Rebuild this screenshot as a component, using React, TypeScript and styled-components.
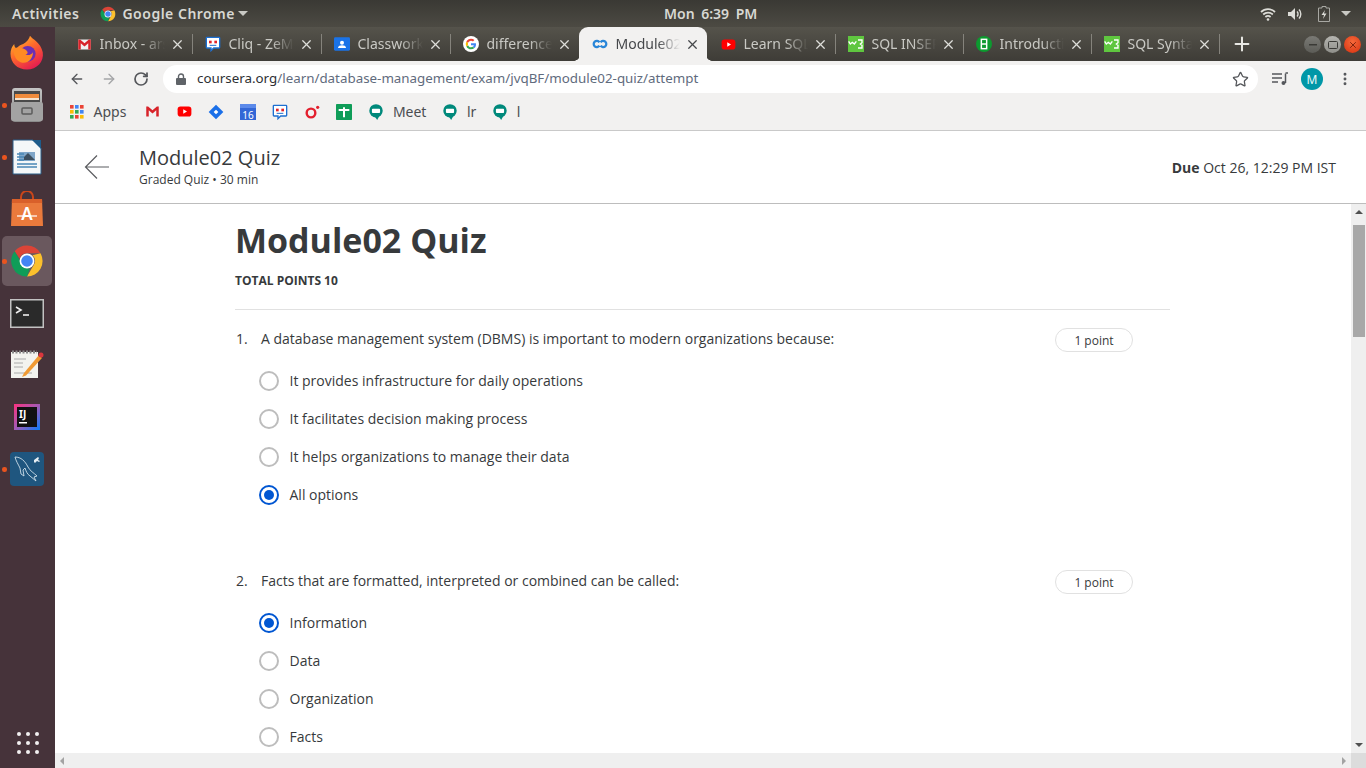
import React from 'react';
import styled, { createGlobalStyle, css } from 'styled-components';
import { ArrowLeft, ArrowRight, MoreVertical, Plus, RotateCw, Star, X } from 'lucide-react';

const GlobalStyle = createGlobalStyle`
  html, body {
    margin: 0;
    height: 100%;
    overflow: hidden;
    background: #fff;
  }
  #root {
    height: 100%;
  }
  * {
    box-sizing: border-box;
  }
`;

const Screen = styled.div`
  width: 1366px;
  height: 768px;
  display: flex;
  flex-direction: column;
  overflow: hidden;
`;

/* gnome top bar */
const TopBar = styled.header`
  height: 27px;
  flex: none;
  display: flex;
  align-items: center;
  position: relative;
  padding: 0 0 0 12px;
  background: linear-gradient(#3a3934, #4c4a43);
  color: #d8d8d3;
  font: 600 14px 'Noto Sans', sans-serif;
`;

const Spaced = styled.span`
  letter-spacing: 0.5px;
`;

const AppMenu = styled.div`
  display: flex;
  align-items: center;
  gap: 6px;
  margin-left: 21px;
`;

const Caret = styled.span<{ $pull?: boolean }>`
  width: 0;
  height: 0;
  margin-left: ${(p) => (p.$pull ? '-3px' : '0')};
  border-left: 5px solid transparent;
  border-right: 5px solid transparent;
  border-top: 5px solid #c9c9c4;
`;

const Clock = styled.div`
  position: absolute;
  left: 664px;
  top: 4px;
  word-spacing: 3px;
`;

const Tray = styled.div`
  margin-left: auto;
  display: flex;
  align-items: center;
  gap: 11px;
  padding-right: 15px;
`;

const BatterySlot = styled.span`
  display: flex;
  margin-left: 4px;
`;

const Desktop = styled.div`
  flex: 1;
  display: flex;
  min-height: 0;
`;

/* launcher on the left */
const Dock = styled.nav`
  width: 55px;
  flex: none;
  display: flex;
  flex-direction: column;
  align-items: center;
  padding-top: 1px;
  background: #46333a;
`;

const DockItem = styled.div<{ $active?: boolean; $running?: boolean }>`
  width: 50px;
  height: 50px;
  margin: 0 1px 2px 0;
  flex: none;
  display: flex;
  align-items: center;
  justify-content: center;
  position: relative;
  border-radius: 5px;
  background: ${(p) => (p.$active ? '#6a585e' : 'transparent')};
  &::before {
    content: '';
    display: ${(p) => (p.$running ? 'block' : 'none')};
    position: absolute;
    left: 0;
    top: 23px;
    width: 4.5px;
    height: 4.5px;
    border-radius: 50%;
    background: #e9541f;
  }
`;

const DockSpacer = styled.div`
  flex: 1;
`;

const AppGrid = styled.div`
  display: grid;
  grid-template-columns: repeat(3, 4px);
  gap: 5px;
  margin-bottom: 14px;
  span {
    width: 4px;
    height: 4px;
    border-radius: 50%;
    background: #f2f0f0;
  }
`;

const Browser = styled.div`
  flex: 1;
  min-width: 0;
  display: flex;
  flex-direction: column;
`;

const TabStrip = styled.div`
  height: 34px;
  flex: none;
  display: flex;
  padding-left: 8px;
  background: linear-gradient(#55534b, #3e3c37);
`;

const activeFlares = css`
  &::before,
  &::after {
    content: '';
    position: absolute;
    bottom: 0;
    width: 6px;
    height: 6px;
  }
  &::before {
    left: -5px;
    background: radial-gradient(circle at 0 0, transparent 5.5px, #f2f1f0 6px);
  }
  &::after {
    right: -5px;
    background: radial-gradient(circle at 100% 0, transparent 5.5px, #f2f1f0 6px);
  }
`;

const Tab = styled.div<{ $active?: boolean; $wide?: boolean; $bare?: boolean }>`
  width: ${(p) => (p.$wide ? 129 : 128)}px;
  flex: none;
  display: flex;
  align-items: center;
  padding: 0 7.5px 0 13px;
  position: relative;
  font: 400 14px 'Noto Sans', sans-serif;
  color: ${(p) => (p.$active ? '#45474a' : '#c9c9c4')};
  background: ${(p) => (p.$active ? '#f2f1f0' : 'transparent')};
  border-radius: ${(p) => (p.$active ? '9px 9px 0 0' : '0')};
  ${(p) =>
    p.$active
      ? activeFlares
      : css`
          &::after {
            content: '';
            display: ${p.$bare ? 'none' : 'block'};
            position: absolute;
            right: -1px;
            top: 7px;
            height: 20px;
            width: 1px;
            background: #85837c;
          }
        `}
`;

const TabIcon = styled.span`
  width: 16px;
  height: 16px;
  flex: none;
  display: flex;
  align-items: center;
  justify-content: center;
`;

const TabTitle = styled.span`
  flex: 1;
  min-width: 0;
  margin: 0 0 2px 7.5px;
  overflow: hidden;
  white-space: nowrap;
  -webkit-mask-image: linear-gradient(90deg, #000 65%, transparent 100%);
  mask-image: linear-gradient(90deg, #000 65%, transparent 100%);
`;

const TabClose = styled(X)`
  flex: none;
  margin-left: 5px;
`;

const NewTab = styled(Plus)`
  margin: 6px 0 0 12px;
  color: #e8e8e4;
`;

const WindowButtons = styled.div`
  margin-left: auto;
  display: flex;
  gap: 3px;
  padding: 9px 5px 0 0;
`;

const WindowButton = styled.div<{ $kind: 'min' | 'max' | 'close' }>`
  width: 17px;
  height: 17px;
  border-radius: 50%;
  display: flex;
  align-items: center;
  justify-content: center;
  background: ${(p) =>
    p.$kind === 'close'
      ? 'radial-gradient(circle at 50% 35%, #f7693a, #d5300f)'
      : p.$kind === 'max'
        ? 'linear-gradient(#b5b5b0, #8f8f8a)'
        : 'linear-gradient(#7a7a75, #5c5c57)'};
`;

const Toolbar = styled.div`
  height: 36px;
  flex: none;
  display: flex;
  align-items: flex-start;
  padding: 4px 0 0 14px;
  background: #f2f1f0;
`;

const NavButton = styled.div<{ $dim?: boolean }>`
  width: 16px;
  height: 28px;
  margin-right: 16px;
  display: flex;
  align-items: center;
  justify-content: center;
  color: ${(p) => (p.$dim ? '#a4a5a7' : '#55575b')};
`;

const Omnibox = styled.div`
  width: 1095px;
  height: 28px;
  margin-left: -2px;
  display: flex;
  align-items: center;
  padding: 0 9px 0 13px;
  border-radius: 14px;
  background: #fff;
  color: #5f6b7d;
  font: 400 13.37px 'Noto Sans', sans-serif;
  b {
    font-weight: 400;
    color: #2d2f33;
  }
`;

const Url = styled.div`
  flex: 1;
  margin: 0 0 2px 11px;
`;

const ToolbarEnd = styled.div`
  display: flex;
  align-items: center;
  height: 28px;
  margin-left: 14px;
  color: #55575b;
`;

const Avatar = styled.div`
  width: 22px;
  height: 22px;
  margin-left: 13px;
  border-radius: 50%;
  display: flex;
  align-items: center;
  justify-content: center;
  background: #0097a7;
  color: #e8f7f8;
  font: 400 12px 'Noto Sans', sans-serif;
`;

const MenuDots = styled(MoreVertical)`
  margin-left: 14px;
`;

const BookmarksBar = styled.div`
  height: 34px;
  flex: none;
  display: flex;
  align-items: center;
  padding: 0 0 4px 14px;
  background: #f2f1f0;
  color: #4b4d50;
  font: 400 14px 'Noto Sans', sans-serif;
  border-bottom: 1px solid #c9c9c9;
`;

const Bookmark = styled.div`
  display: flex;
  align-items: center;
  gap: 8.5px;
  margin-right: 16px;
  &:first-child {
    margin-right: 18px;
  }
`;

const BookmarkIcon = styled.span`
  width: 16px;
  height: 16px;
  flex: none;
  display: flex;
  align-items: center;
  justify-content: center;
`;

/* coursera page */
const PageHeader = styled.div`
  height: 73px;
  flex: none;
  display: flex;
  align-items: center;
  padding: 0 30px 0 29px;
  background: #fff;
  border-bottom: 1px solid #bdbdbd;
  color: #373a3c;
  font-family: 'Open Sans', sans-serif;
`;

const HeaderTitles = styled.div`
  margin-left: 29px;
  padding-bottom: 2px;
`;

const HeaderTitle = styled.div`
  font-size: 20px;
  line-height: 28px;
`;

const HeaderSub = styled.div`
  font-size: 12px;
  line-height: 16px;
`;

const Due = styled.div`
  margin-left: auto;
  font-size: 14px;
  b {
    font-weight: 700;
  }
`;

const PageBody = styled.div`
  flex: 1;
  min-height: 0;
  display: grid;
  grid-template-columns: 1fr 15px;
  grid-template-rows: 1fr 15px;
`;

const Content = styled.main`
  min-height: 0;
  overflow: hidden;
  padding: 13px 0 0 180px;
  color: #373a3c;
  font: 400 14px 'Open Sans', sans-serif;
`;

const Column = styled.div`
  width: 935px;
`;

const QuizTitle = styled.h1`
  margin: 0;
  font-size: 34px;
  line-height: 46px;
  font-weight: 700;
`;

const TotalPoints = styled.div`
  margin-top: 9px;
  padding-bottom: 20px;
  font-size: 12px;
  line-height: 17px;
  font-weight: 700;
  border-bottom: 1px solid #e1e1e1;
`;

const Question = styled.section`
  margin-top: 16px;
  margin-bottom: 54px;
`;

const QuestionHead = styled.div`
  display: flex;
  align-items: center;
  height: 24px;
  margin-bottom: 12px;
`;

const QuestionNumber = styled.span`
  width: 26px;
  padding-left: 1px;
`;

const QuestionText = styled.span`
  flex: 1;
`;

const PointPill = styled.div`
  width: 78px;
  height: 24px;
  margin: 4px 37px 0 0;
  display: flex;
  align-items: center;
  justify-content: center;
  border: 1px solid #e1e1e1;
  border-radius: 12px;
  font-size: 12px;
`;

const Option = styled.label`
  display: flex;
  align-items: center;
  height: 38px;
  padding-left: 24px;
`;

const OptionLabel = styled.span`
  margin-bottom: 2px;
`;

const Radio = styled.span<{ $checked?: boolean }>`
  width: 20px;
  height: 20px;
  margin-right: 10.5px;
  flex: none;
  border-radius: 50%;
  border: 2px solid ${(p) => (p.$checked ? '#0056d2' : '#bdbdbd')};
  display: flex;
  align-items: center;
  justify-content: center;
  &::after {
    content: '';
    display: ${(p) => (p.$checked ? 'block' : 'none')};
    width: 10px;
    height: 10px;
    border-radius: 50%;
    background: #0056d2;
  }
`;

const VScroll = styled.div`
  background: #efefef;
  display: flex;
  flex-direction: column;
  align-items: center;
  padding-top: 6px;
`;

const Thumb = styled.div`
  width: 12px;
  height: 112px;
  margin-top: 11px;
  background: #a8a8a8;
`;

const HScroll = styled.div`
  background: #efefef;
  display: flex;
  align-items: center;
  justify-content: space-between;
  padding: 0 5px;
`;

const Corner = styled.div`
  background: #dcdcdc;
`;

const ScrollArrow = styled.span<{ $dir: 'up' | 'down' | 'left' | 'right'; $dim?: boolean }>`
  width: 0;
  height: 0;
  border-style: solid;
  border-color: transparent;
  ${(p) => {
    const c = p.$dim ? '#a3a3a3' : '#505050';
    if (p.$dir === 'up') return `border-width: 0 4px 4px; border-bottom-color: ${c};`;
    if (p.$dir === 'down') return `border-width: 4px 4px 0; border-top-color: ${c}; margin-top: auto; margin-bottom: 6px;`;
    if (p.$dir === 'left') return `border-width: 4px 4px 4px 0; border-right-color: ${c};`;
    return `border-width: 4px 0 4px 4px; border-left-color: ${c};`;
  }}
`;

/* --- drawings --- */

const ChromeIcon: React.FC<{ size: number }> = ({ size }) => (
  <svg width={size} height={size} viewBox="0 0 48 48">
    <path d="M24 2a22 22 0 0 1 19.05 11H24a11 11 0 0 0-10.4 7.4L6.6 10.3A22 22 0 0 1 24 2z" fill="#db4437" />
    <path d="M43.05 13A22 22 0 0 1 24 46l9.5-16.5A11 11 0 0 0 31.8 16z" fill="#fbc02d" />
    <path d="M24 46A22 22 0 0 1 6.6 10.3l9.9 17.2A11 11 0 0 0 28 34.3z" fill="#0f9d58" />
    <circle cx="24" cy="24" r="10.5" fill="#fff" />
    <circle cx="24" cy="24" r="8.2" fill="#4285f4" />
  </svg>
);

const GmailIcon = () => (
  <svg width="15" height="15" viewBox="0 0 24 24">
    <path d="M2 4h20v16H2z" fill="#f1f1f1" />
    <path d="M2 20V4h3l7 6 7-6h3v16h-4V10l-6 5-6-5v10z" fill="#d8232a" />
  </svg>
);

const CliqIcon = () => (
  <svg width="16" height="16" viewBox="0 0 24 24">
    <path d="M3 2h18a1 1 0 0 1 1 1v14a1 1 0 0 1-1 1h-8l-4 4v-4H3a1 1 0 0 1-1-1V3a1 1 0 0 1 1-1z" fill="#fff" stroke="#1d6fd1" strokeWidth="2" />
    <rect x="6" y="7" width="4" height="4" fill="#e2242b" />
    <rect x="14" y="7" width="4" height="4" fill="#e2242b" />
    <path d="M7 14h10" stroke="#1d6fd1" strokeWidth="1.5" />
  </svg>
);

const ClassroomIcon = () => (
  <svg width="16" height="16" viewBox="0 0 24 24">
    <rect x="0" y="2" width="24" height="20" rx="2" fill="#1a73e8" />
    <circle cx="12" cy="10" r="3" fill="#fff" />
    <path d="M6 18c0-3 3-4 6-4s6 1 6 4z" fill="#fff" />
  </svg>
);

const GoogleIcon = () => (
  <svg width="16" height="16" viewBox="0 0 48 48">
    <circle cx="24" cy="24" r="24" fill="#fff" />
    <path d="M39 24.5c0-1-.1-2-.3-3H24v6h8.5a7.5 7.5 0 0 1-3.2 4.8l5 3.9c3-2.7 4.7-6.8 4.7-11.700z" fill="#4285f4" />
    <path d="M24 40c4.100 0 7.500-1.300 10.300-3.800l-5-3.900c-1.400.9-3.200 1.500-5.300 1.500-4 0-7.500-2.700-8.700-6.400l-5.200 4C12.700 36.700 17.900 40 24 40z" fill="#34a853" />
    <path d="M15.300 27.400a10 10 0 0 1 0-6.800l-5.200-4a16 16 0 0 0 0 14.800z" fill="#fbbc05" />
    <path d="M24 14c2.300 0 4.300.8 5.900 2.300l4.400-4.400A15.500 15.500 0 0 0 24 8c-6.100 0-11.300 3.300-13.900 8.600l5.200 4c1.200-3.700 4.700-6.600 8.700-6.600z" fill="#ea4335" />
  </svg>
);

const CourseraIcon = () => (
  <svg width="16" height="16" viewBox="0 0 24 24" fill="none" stroke="#2a86d8" strokeWidth="3.4">
    <path d="M11 9.500a4.600 4.600 0 1 0 0 5M13 14.500a4.600 4.600 0 1 0 0-5" />
  </svg>
);

const YoutubeIcon = () => (
  <svg width="15" height="15" viewBox="0 0 24 24">
    <rect x="1" y="4" width="22" height="16" rx="4.500" fill="#f00" />
    <path d="M10 8.500v7l6-3.500z" fill="#fff" />
  </svg>
);

const W3Icon = () => (
  <svg width="16" height="16" viewBox="0 0 24 24">
    <rect width="24" height="24" fill="#5fc63f" />
    <path d="M1 8l2.500 4 3-2.500 3 2.500 3-4M15 6h6v4l-2.500 2 2.500 2v4h-6" fill="none" stroke="#fff" strokeWidth="2" />
  </svg>
);

const BootstrapIcon = () => (
  <svg width="16" height="16" viewBox="0 0 24 24">
    <circle cx="12" cy="12" r="12" fill="#0c9a2f" />
    <rect x="8" y="5" width="8" height="14" fill="none" stroke="#fff" strokeWidth="2.200" />
    <path d="M8 12h8" stroke="#fff" strokeWidth="2.200" />
  </svg>
);

const AppsIcon = () => (
  <svg width="14" height="14" viewBox="0 0 14 14">
    {['#ea4335', '#4285f4', '#ea4335', '#fbbc05', '#34a853', '#4285f4', '#34a853', '#ea4335', '#fbbc05'].map((c, i) => (
      <rect key={i} x={(i % 3) * 5} y={Math.floor(i / 3) * 5} width="3.600" height="3.600" fill={c} />
    ))}
  </svg>
);

const JiraIcon = () => (
  <svg width="16" height="16" viewBox="0 0 24 24">
    <path d="M12 1l11 11-11 11L1 12z" fill="#1a6fe8" />
    <path d="M12 8.500l3.500 3.500-3.500 3.500L8.500 12z" fill="#fff" />
  </svg>
);

const CalendarIcon = () => (
  <svg width="16" height="16" viewBox="0 0 16 16">
    <rect width="16" height="16" fill="#3367d6" />
    <rect width="16" height="4" fill="#5c8aea" />
    <text x="8" y="14.500" textAnchor="middle" fontSize="10" fontFamily="Noto Sans" fill="#fff">16</text>
  </svg>
);

const RingIcon = () => (
  <svg width="16" height="16" viewBox="0 0 24 24" fill="none">
    <circle cx="10.500" cy="13.500" r="6.500" stroke="#e3202e" strokeWidth="3.600" />
    <circle cx="20.500" cy="5" r="2.400" fill="#e3202e" />
  </svg>
);

const SheetIcon = () => (
  <svg width="16" height="16" viewBox="0 0 24 24">
    <rect width="24" height="24" rx="1" fill="#0f9d58" />
    <path d="M4 9h16M12 5v15" stroke="#fff" strokeWidth="3" />
  </svg>
);

const MeetIcon = () => (
  <svg width="14" height="16" viewBox="0 0 24 27">
    <circle cx="12" cy="11.500" r="11.500" fill="#00897b" />
    <path d="M9 20h9l-4 7z" fill="#00897b" />
    <rect x="5" y="8" width="14" height="7" rx="1.500" fill="#fff" />
  </svg>
);

const LockIcon = () => (
  <svg width="10" height="12" viewBox="0 0 10 12">
    <path d="M2.500 5V3.500a2.500 2.500 0 0 1 5 0V5" fill="none" stroke="#5f6368" strokeWidth="1.400" />
    <rect y="5" width="10" height="7" rx="1" fill="#5f6368" />
  </svg>
);

const FirefoxIcon = () => (
  <svg width="36" height="38" viewBox="0 0 48 48">
    <defs>
      <linearGradient id="ff" x1="0" y1="0" x2="0.6" y2="1">
        <stop offset="0" stopColor="#ffcf2e" />
        <stop offset="0.5" stopColor="#ff6a2b" />
        <stop offset="1" stopColor="#e5214f" />
      </linearGradient>
    </defs>
    <path d="M24 46C11 46 2 37 2 25c0-5 2-10 5-13 0 3 1 5 3 6 2-3 5-5 9-6 5-3 8-7 9-11 3 5 14 8 17 22 2 13-8 23-21 23z" fill="url(#ff)" />
    <circle cx="25" cy="25" r="10.500" fill="#6b2fb3" />
    <path d="M6 18c5-2 10-2 15 1 5 3 5 6 1 7 4 2 8 0 10-3 0 8-6 15-14 14C11 36 5 28 6 18z" fill="#ff8a24" />
  </svg>
);

const FilesIcon = () => (
  <svg width="32" height="34" viewBox="0 0 32 34">
    <defs>
      <linearGradient id="cab" x1="0" y1="0" x2="0" y2="1">
        <stop offset="0" stopColor="#c4c4c4" />
        <stop offset="1" stopColor="#8a8a8a" />
      </linearGradient>
    </defs>
    <rect x="1" y="0" width="30" height="34" rx="3" fill="url(#cab)" />
    <rect x="3" y="3" width="26" height="11" fill="#4a4a4a" />
    <rect x="4" y="6" width="24" height="4" fill="#ef8b3c" />
    <rect x="4" y="10" width="24" height="2" fill="#f5e3cf" />
    <rect x="0" y="14" width="32" height="19" rx="2" fill="#a3a3a3" />
    <rect x="11" y="20" width="10" height="6" rx="1" fill="none" stroke="#5c5c5c" strokeWidth="1.500" />
  </svg>
);

const WriterIcon = () => (
  <svg width="30" height="36" viewBox="0 0 30 36">
    <path d="M1 1h20l8 8v26H1z" fill="#f4f7f8" stroke="#2a5f88" />
    <path d="M20 1h9v9z" fill="#1d5b8a" />
    <path d="M7 13h16v9H7z" fill="#7fa6c8" />
    <path d="M12 18l4-4 3 3 4 4H12z" fill="#3d4f5f" />
    <path d="M5 15h7M5 18h7M5 21h7M5 25h20M5 28h20" stroke="#4a88b5" strokeWidth="1.300" />
  </svg>
);

const SoftwareIcon = () => (
  <svg width="34" height="36" viewBox="0 0 34 36">
    <path d="M11 9V6a6 6 0 0 1 12 0v3" fill="none" stroke="#c9461a" strokeWidth="2" />
    <path d="M2 8h30l1 27H1z" fill="#ea7a3c" />
    <path d="M2 8h30l.2 4H1.800z" fill="#d9602a" />
    <text x="17" y="29" textAnchor="middle" fontSize="17" fontWeight="600" fontFamily="Noto Sans" fill="#fff">A</text>
    <path d="M7 25h20" stroke="#fff" strokeWidth="1.200" />
  </svg>
);

const TerminalIcon = () => (
  <svg width="34" height="29" viewBox="0 0 34 29">
    <rect x="0.750" y="0.750" width="32.500" height="27.500" fill="#2a2a2a" stroke="#c2c2c2" strokeWidth="1.500" />
    <path d="M6 8l5 3-5 3" fill="none" stroke="#eee" strokeWidth="1.600" />
    <path d="M13 16h6" stroke="#eee" strokeWidth="1.600" />
  </svg>
);

const NotesIcon = () => (
  <svg width="34" height="30" viewBox="0 0 34 30">
    <rect x="1" y="2" width="27" height="26" fill="#f3f3ef" />
    <path d="M2 2h25" stroke="#888" strokeWidth="3" strokeDasharray="2 1.500" />
    <path d="M4 9h12M4 13h9M4 17h9M4 23h18" stroke="#aaa" strokeWidth="1" />
    <path d="M14 23l-2 4 4-1.500L32 8l-3-3z" fill="#f09a33" />
    <circle cx="31" cy="5" r="2.500" fill="#d9363e" />
  </svg>
);

const IdeaIcon = () => (
  <svg width="26" height="26" viewBox="0 0 26 26">
    <defs>
      <linearGradient id="ij" x1="0" y1="0" x2="1" y2="1">
        <stop offset="0" stopColor="#fc317e" />
        <stop offset="0.5" stopColor="#a25bb5" />
        <stop offset="1" stopColor="#087cfa" />
      </linearGradient>
    </defs>
    <rect width="26" height="26" fill="url(#ij)" />
    <rect x="3" y="3" width="20" height="20" fill="#111" />
    <text x="5" y="14" fontSize="10" fontWeight="700" fontFamily="Noto Sans" fill="#fff">IJ</text>
    <rect x="5" y="18" width="8" height="1.500" fill="#fff" />
  </svg>
);

const MysqlIcon = () => (
  <svg width="34" height="34" viewBox="0 0 34 34">
    <rect width="34" height="34" rx="4" fill="#1f567f" />
    <path d="M5 5c6 0 10 4 13 10 2 4 6 6 9 9l-3 1 2 4-6-5c-3-2-4-5-5-8l-2 2 1 6-3-2-1-6C8 12 6 9 5 5z" fill="none" stroke="#cfe0ea" strokeWidth="0.900" />
    <path d="M24 8l4-3 1 1-1 2 2 1-1 1-2-1-2 2-1-1z" fill="#e6eef3" />
  </svg>
);

const WifiIcon = () => (
  <svg width="16" height="14" viewBox="0 0 16 14" fill="none" stroke="#dcdcd7" strokeWidth="1.800">
    <path d="M1 5a10 10 0 0 1 14 0M3.200 7.500a7 7 0 0 1 9.600 0M5.400 10a4 4 0 0 1 5.200 0" />
    <circle cx="8" cy="12.500" r="1.300" fill="#dcdcd7" stroke="none" />
  </svg>
);

const VolumeIcon = () => (
  <svg width="16" height="14" viewBox="0 0 16 14" fill="none" stroke="#dcdcd7" strokeWidth="1.400">
    <path d="M1 5h3l4-4v12L4 9H1z" fill="#dcdcd7" stroke="none" />
    <path d="M10 4.500a3.500 3.500 0 0 1 0 5M12 2.500a6.500 6.500 0 0 1 0 9" />
  </svg>
);

const BatteryIcon = () => (
  <svg width="12" height="16" viewBox="0 0 12 16">
    <path d="M4 0.500h4v1.500h3.500v13.500h-11V2H4z" fill="none" stroke="#a8a8a3" />
    <path d="M7 4L3.500 9H6l-1 4 3.500-5.500H6z" fill="#dcdcd7" />
  </svg>
);

const QueueIcon = () => (
  <svg width="16" height="14" viewBox="0 0 16 14" fill="none" stroke="#55575b" strokeWidth="1.500">
    <path d="M0 2h10M0 6h10M0 10h6M13.500 1.500v9.500" />
    <path d="M13.500 1h2.500" />
    <circle cx="11.500" cy="11" r="2" fill="#55575b" stroke="none" />
  </svg>
);

const BackArrow = () => (
  <svg width="26" height="26" viewBox="0 0 26 26" fill="none" stroke="#5b5d60" strokeWidth="1.200">
    <path d="M25 13H2M13 1.500L1.500 13 13 24.500" />
  </svg>
);

const tabs = [
  { title: 'Inbox - arshadkhan', icon: <GmailIcon /> },
  { title: 'Cliq - ZeMeet', icon: <CliqIcon /> },
  { title: 'Classwork for', icon: <ClassroomIcon /> },
  { title: 'difference betw', icon: <GoogleIcon /> },
  { title: 'Module02 Quiz', icon: <CourseraIcon />, active: true },
  { title: 'Learn SQL', icon: <YoutubeIcon /> },
  { title: 'SQL INSERT', icon: <W3Icon /> },
  { title: 'Introduction', icon: <BootstrapIcon /> },
  { title: 'SQL Syntax', icon: <W3Icon /> },
];

const bookmarks = [
  { icon: <AppsIcon />, label: 'Apps' },
  { icon: <GmailIcon /> },
  { icon: <YoutubeIcon /> },
  { icon: <JiraIcon /> },
  { icon: <CalendarIcon /> },
  { icon: <CliqIcon /> },
  { icon: <RingIcon /> },
  { icon: <SheetIcon /> },
  { icon: <MeetIcon />, label: 'Meet' },
  { icon: <MeetIcon />, label: 'lr' },
  { icon: <MeetIcon />, label: 'l' },
];

const questions = [
  {
    number: '1.',
    text: 'A database management system (DBMS) is important to modern organizations because:',
    options: [
      'It provides infrastructure for daily operations',
      'It facilitates decision making process',
      'It helps organizations to manage their data',
      'All options',
    ],
    checked: 3,
  },
  {
    number: '2.',
    text: 'Facts that are formatted, interpreted or combined can be called:',
    options: ['Information', 'Data', 'Organization', 'Facts'],
    checked: 0,
  },
];

const App: React.FunctionComponent = () => (
  <Screen>
    <GlobalStyle />
    <TopBar>
      <Spaced>Activities</Spaced>
      <AppMenu>
        <ChromeIcon size={16} />
        <Spaced>Google Chrome</Spaced>
        <Caret $pull />
      </AppMenu>
      <Clock>Mon 6:39 PM</Clock>
      <Tray>
        <WifiIcon />
        <VolumeIcon />
        <BatterySlot><BatteryIcon /></BatterySlot>
        <Caret />
      </Tray>
    </TopBar>
    <Desktop>
      <Dock>
        <DockItem><FirefoxIcon /></DockItem>
        <DockItem $running><FilesIcon /></DockItem>
        <DockItem $running><WriterIcon /></DockItem>
        <DockItem><SoftwareIcon /></DockItem>
        <DockItem $active $running><ChromeIcon size={34} /></DockItem>
        <DockItem><TerminalIcon /></DockItem>
        <DockItem><NotesIcon /></DockItem>
        <DockItem><IdeaIcon /></DockItem>
        <DockItem $running><MysqlIcon /></DockItem>
        <DockSpacer />
        <AppGrid>
          {Array.from({ length: 9 }, (_, i) => (
            <span key={i} />
          ))}
        </AppGrid>
      </Dock>
      <Browser>
        <TabStrip>
          {tabs.map((tab, i) => (
            <Tab key={tab.title} $active={tab.active} $wide={i < 4} $bare={i === 3}>
              <TabIcon>{tab.icon}</TabIcon>
              <TabTitle>{tab.title}</TabTitle>
              <TabClose size={15} strokeWidth={2} color={tab.active ? '#45474a' : '#dededa'} />
            </Tab>
          ))}
          <NewTab size={22} strokeWidth={2.200} />
          <WindowButtons>
            <WindowButton $kind="min">
              <svg width="8" height="2"><rect width="8" height="1.500" fill="#3a3a36" /></svg>
            </WindowButton>
            <WindowButton $kind="max">
              <svg width="10" height="8"><rect x="0.500" y="0.500" width="9" height="7" rx="1" fill="none" stroke="#3a3a36" /></svg>
            </WindowButton>
            <WindowButton $kind="close">
              <X size={10} strokeWidth={2} color="#6b1a08" />
            </WindowButton>
          </WindowButtons>
        </TabStrip>
        <Toolbar>
          <NavButton><ArrowLeft size={24} strokeWidth={2} /></NavButton>
          <NavButton $dim><ArrowRight size={24} strokeWidth={2} /></NavButton>
          <NavButton><RotateCw size={18} strokeWidth={2.600} /></NavButton>
          <Omnibox>
            <LockIcon />
            <Url><b>coursera.org</b>/learn/database-management/exam/jvqBF/module02-quiz/attempt</Url>
            <Star size={17} strokeWidth={1.800} color="#55575b" />
          </Omnibox>
          <ToolbarEnd>
            <QueueIcon />
            <Avatar>M</Avatar>
            <MenuDots size={16} strokeWidth={2.400} />
          </ToolbarEnd>
        </Toolbar>
        <BookmarksBar>
          {bookmarks.map((bookmark, i) => (
            <Bookmark key={i}>
              <BookmarkIcon>{bookmark.icon}</BookmarkIcon>
              {bookmark.label && <span>{bookmark.label}</span>}
            </Bookmark>
          ))}
        </BookmarksBar>
        <PageHeader>
          <BackArrow />
          <HeaderTitles>
            <HeaderTitle>Module02 Quiz</HeaderTitle>
            <HeaderSub>Graded Quiz • 30 min</HeaderSub>
          </HeaderTitles>
          <Due><b>Due</b> Oct 26, 12:29 PM IST</Due>
        </PageHeader>
        <PageBody>
          <Content>
            <Column>
              <QuizTitle>Module02 Quiz</QuizTitle>
              <TotalPoints>TOTAL POINTS 10</TotalPoints>
              {questions.map((q) => (
                <Question key={q.number}>
                  <QuestionHead>
                    <QuestionNumber>{q.number}</QuestionNumber>
                    <QuestionText>{q.text}</QuestionText>
                    <PointPill>1 point</PointPill>
                  </QuestionHead>
                  {q.options.map((option, i) => (
                    <Option key={option}>
                      <Radio $checked={i === q.checked} />
                      <OptionLabel>{option}</OptionLabel>
                    </Option>
                  ))}
                </Question>
              ))}
            </Column>
          </Content>
          <VScroll>
            <ScrollArrow $dir="up" />
            <Thumb />
            <ScrollArrow $dir="down" />
          </VScroll>
          <HScroll>
            <ScrollArrow $dir="left" $dim />
            <ScrollArrow $dir="right" $dim />
          </HScroll>
          <Corner />
        </PageBody>
      </Browser>
    </Desktop>
  </Screen>
);

export default App;
